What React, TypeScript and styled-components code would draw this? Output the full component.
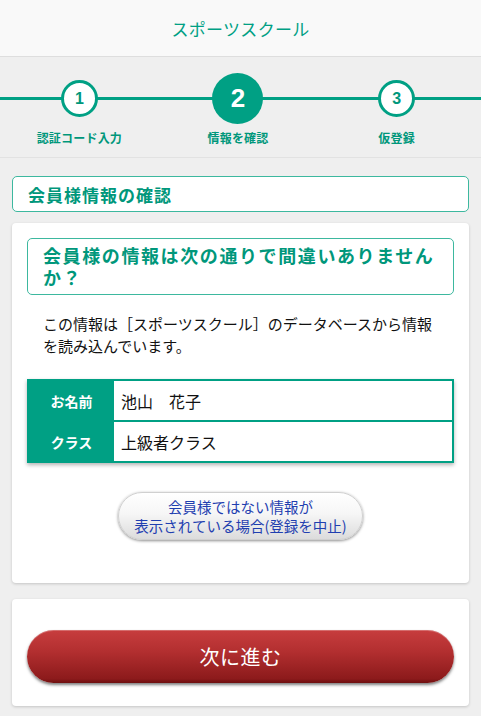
import React from 'react'
import styled, { createGlobalStyle } from 'styled-components'

const teal = '#00a084'
const tealText = '#00977b'

const GlobalStyle = createGlobalStyle`
    html, body {
        margin: 0;
        padding: 0;
        background: #efefef;
    }
    body {
        font-family: "Noto Sans CJK JP", "Noto Sans", sans-serif;
        color: #111;
    }
`

const Header = styled.header`
    height: 56px;
    background: #f9f9f9;
    border-bottom: 1px solid #dedede;
    display: flex;
    align-items: center;
    justify-content: center;
    h1 {
        margin: 0;
        font-size: 17px;
        font-weight: 400;
        color: ${teal};
        letter-spacing: 0.3px;
    }
`

const Steps = styled.ol`
    position: relative;
    margin: 0;
    padding: 16px 5px 0 0;
    height: 84px;
    list-style: none;
    display: grid;
    grid-template-columns: repeat(3, 1fr);
    border-bottom: 1px solid #e2e2e2;
    &:before {
        content: '';
        position: absolute;
        left: 0;
        right: 0;
        top: 40px;
        height: 3px;
        background: ${teal};
    }
`

const Step = styled.li`
    position: relative;
    display: flex;
    flex-direction: column;
    align-items: center;
`

const Badge = styled.div<{ active?: boolean }>`
    box-sizing: border-box;
    width: ${({ active }) => active ? '51px' : '37px'};
    height: ${({ active }) => active ? '51px' : '37px'};
    margin-top: ${({ active }) => active ? '0' : '7px'};
    margin-bottom: ${({ active }) => active ? '6px' : '13px'};
    border-radius: 50%;
    border: ${({ active }) => active ? 'none' : `3px solid ${teal}`};
    background: ${({ active }) => active ? teal : '#fff'};
    color: ${({ active }) => active ? '#fff' : tealText};
    font-family: "Liberation Sans", Arial, sans-serif;
    font-weight: 700;
    font-size: ${({ active }) => active ? '26px' : '16px'};
    display: flex;
    align-items: center;
    justify-content: center;
`

const StepLabel = styled.span`
    font-size: 12px;
    font-weight: 700;
    color: ${tealText};
    line-height: 16px;
    letter-spacing: 0.2px;
`

const Main = styled.main`
    padding: 18px 12px 10px 12px;
    display: flex;
    flex-direction: column;
`

const SectionTitle = styled.h2`
    box-sizing: border-box;
    margin: 0 0 11px;
    height: 36px;
    padding: 0 15px;
    display: flex;
    align-items: center;
    background: #fff;
    border: 1px solid #3db89f;
    border-radius: 5px;
    font-size: 17px;
    font-weight: 700;
    color: ${tealText};
    letter-spacing: 1px;
`

const Card = styled.section<{ top?: number; bottom?: number }>`
    background: #fff;
    border-radius: 4px;
    box-shadow: 0 1px 3px rgba(0, 0, 0, 0.18);
    padding: ${({ top = 15 }) => top}px 15px ${({ bottom = 43 }) => bottom}px;
    margin-bottom: 16px;
    display: flex;
    flex-direction: column;
`

const Question = styled.h3`
    margin: 0;
    padding: 5px 10px 6px 15px;
    border: 1px solid #3db89f;
    border-radius: 5px;
    font-size: 18px;
    line-height: 22px;
    letter-spacing: 1.6px;
    font-weight: 700;
    color: ${tealText};
`

const Lead = styled.p`
    margin: 18px 0 0;
    padding: 0 16px;
    font-size: 15px;
    line-height: 22px;
`

const InfoTable = styled.table`
    margin-top: 22px;
    width: 100%;
    border-collapse: collapse;
    border: 2px solid ${teal};
    box-shadow: 0 2px 4px rgba(0, 0, 0, 0.3);
    th {
        width: 85px;
        padding: 0;
        background: ${teal};
        color: #fff;
        font-size: 14px;
        font-weight: 700;
        text-align: center;
        border-bottom: 2px solid ${teal};
    }
    td {
        height: 39px;
        padding: 0 7px;
        background: #fff;
        font-size: 16px;
        border-bottom: 2px solid ${teal};
    }
`

const CancelButton = styled.button`
    align-self: center;
    margin-top: 29px;
    width: 245px;
    height: 48px;
    border: 1px solid #d0d0d0;
    border-radius: 24px;
    background: linear-gradient(#ffffff 0%, #f6f6f6 45%, #dcdcdc 100%);
    box-shadow: 0 1px 3px rgba(0, 0, 0, 0.45);
    color: #1f3fb0;
    font-family: inherit;
    font-size: 14.5px;
    line-height: 19px;
    padding: 0;
`

const NextButton = styled.button`
    width: 100%;
    height: 53px;
    border: none;
    border-radius: 27px;
    background: linear-gradient(#c73d3e 0%, #b32f30 40%, #8c1a1b 92%, #6e1010 100%);
    box-shadow: 0 2px 3px rgba(0, 0, 0, 0.5), inset 0 1px 0 rgba(255, 255, 255, 0.25);
    color: #fff;
    font-family: inherit;
    font-size: 20px;
    letter-spacing: 0.5px;
`

const steps = [
    { no: 1, label: '認証コード入力' },
    { no: 2, label: '情報を確認', active: true },
    { no: 3, label: '仮登録' },
]

const rows = [
    { label: 'お名前', value: '池山　花子' },
    { label: 'クラス', value: '上級者クラス' },
]

const App: React.FC = () => {
    return (
        <>
            <GlobalStyle />
            <Header>
                <h1>スポーツスクール</h1>
            </Header>
            <Steps>
                {steps.map((s) => (
                    <Step key={s.no}>
                        <Badge active={s.active}>{s.no}</Badge>
                        <StepLabel>{s.label}</StepLabel>
                    </Step>
                ))}
            </Steps>
            <Main>
                <SectionTitle>会員様情報の確認</SectionTitle>
                <Card>
                    <Question>会員様の情報は次の通りで間違いありませんか？</Question>
                    <Lead>この情報は［スポーツスクール］のデータベースから情報を読み込んでいます。</Lead>
                    <InfoTable>
                        <tbody>
                            {rows.map((r) => (
                                <tr key={r.label}>
                                    <th>{r.label}</th>
                                    <td>{r.value}</td>
                                </tr>
                            ))}
                        </tbody>
                    </InfoTable>
                    <CancelButton type="button">
                        会員様ではない情報が<br />表示されている場合(登録を中止)
                    </CancelButton>
                </Card>
                <Card top={31} bottom={23}>
                    <NextButton type="button">次に進む</NextButton>
                </Card>
            </Main>
        </>
    )
}

export default App
